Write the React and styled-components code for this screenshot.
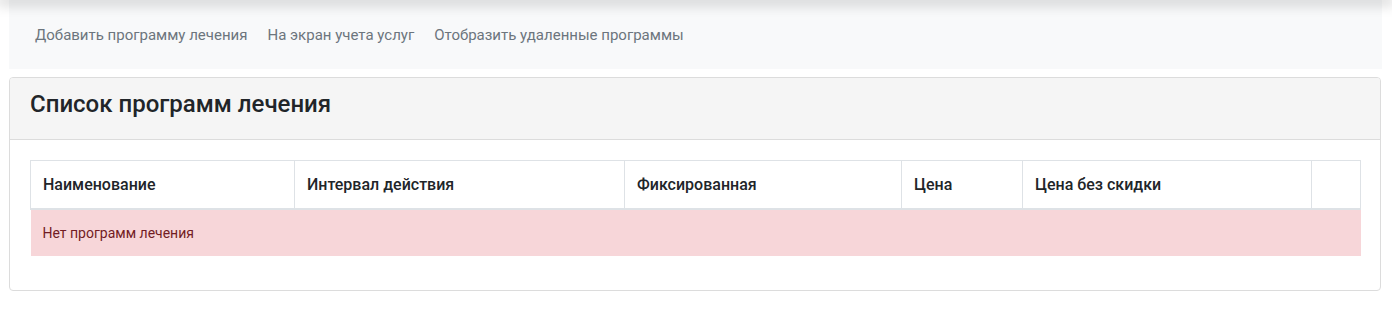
import React from "react";
import styled, { createGlobalStyle } from "styled-components";

const Global = createGlobalStyle`
  html, body { margin: 0; padding: 0; background: #fff; }
  body { font-family: Roboto, "Noto Sans", sans-serif; color: #212529; }
  * { box-sizing: border-box; }
`;

const Page = styled.div`
  padding: 0 10px 0 9px;
`;

const TopShade = styled.div`
  position: relative;
  z-index: 2;
  height: 0;
  margin: 0 -10px 0 -9px;
  box-shadow: 0 0 14px 3px rgba(0, 0, 0, 0.28);
`;

const Nav = styled.nav`
  position: relative;
  z-index: 1;
  height: 69px;
  background: #f8f9fa;
  display: flex;
  align-items: center;
  padding: 0 0 0 16px;
`;

const NavLink = styled.a`
  font-size: 15px;
  color: #6c757d;
  padding: 0 10px;
  text-decoration: none;
  line-height: 20px;
  margin-top: 1px;
`;

const Card = styled.section`
  margin: 8px 1px 0 0;
  border: 1px solid #dcdcdc;
  border-radius: 4px;
  overflow: hidden;
`;

const CardHeader = styled.header`
  background: #f5f5f5;
  border-bottom: 1px solid #dcdcdc;
  padding: 12px 20px;
`;

const Title = styled.h3`
  margin: 0 0 8px;
  font-size: 24px;
  line-height: 1.2;
  font-weight: 500;
  color: #212529;
`;

const CardBody = styled.div`
  padding: 20px;
`;

const Table = styled.table`
  width: 100%;
  border-collapse: collapse;
  margin-bottom: 14px;
  table-layout: fixed;
`;

const Th = styled.th`
  text-align: left;
  font-size: 16px;
  font-weight: 500;
  color: #212529;
  padding: 0 12px;
  height: 49px;
  border: 1px solid #dee2e6;
  border-bottom: 2px solid #dee2e6;
`;

const EmptyCell = styled.td`
  background: #f7d6d9;
  color: #721c24;
  font-size: 14px;
  height: 47px;
  padding: 0 12px;
`;

const cols = [
  { label: "Наименование", w: 264 },
  { label: "Интервал действия", w: 330 },
  { label: "Фиксированная", w: 277 },
  { label: "Цена", w: 121 },
  { label: "Цена без скидки", w: 289 },
  { label: "", w: 49 },
];

export default function App() {
  return (
    <>
      <Global />
      <Page>
        <TopShade />
        <Nav>
          <NavLink href="#">Добавить программу лечения</NavLink>
          <NavLink href="#">На экран учета услуг</NavLink>
          <NavLink href="#">Отобразить удаленные программы</NavLink>
        </Nav>
        <Card>
          <CardHeader>
            <Title>Список программ лечения</Title>
          </CardHeader>
          <CardBody>
            <Table>
              <colgroup>
                {cols.map((c, i) => (
                  <col key={i} style={{ width: c.w }} />
                ))}
              </colgroup>
              <thead>
                <tr>
                  {cols.map((c, i) => (
                    <Th key={i}>{c.label}</Th>
                  ))}
                </tr>
              </thead>
              <tbody>
                <tr>
                  <EmptyCell colSpan={6}>Нет программ лечения</EmptyCell>
                </tr>
              </tbody>
            </Table>
          </CardBody>
        </Card>
      </Page>
    </>
  );
}
